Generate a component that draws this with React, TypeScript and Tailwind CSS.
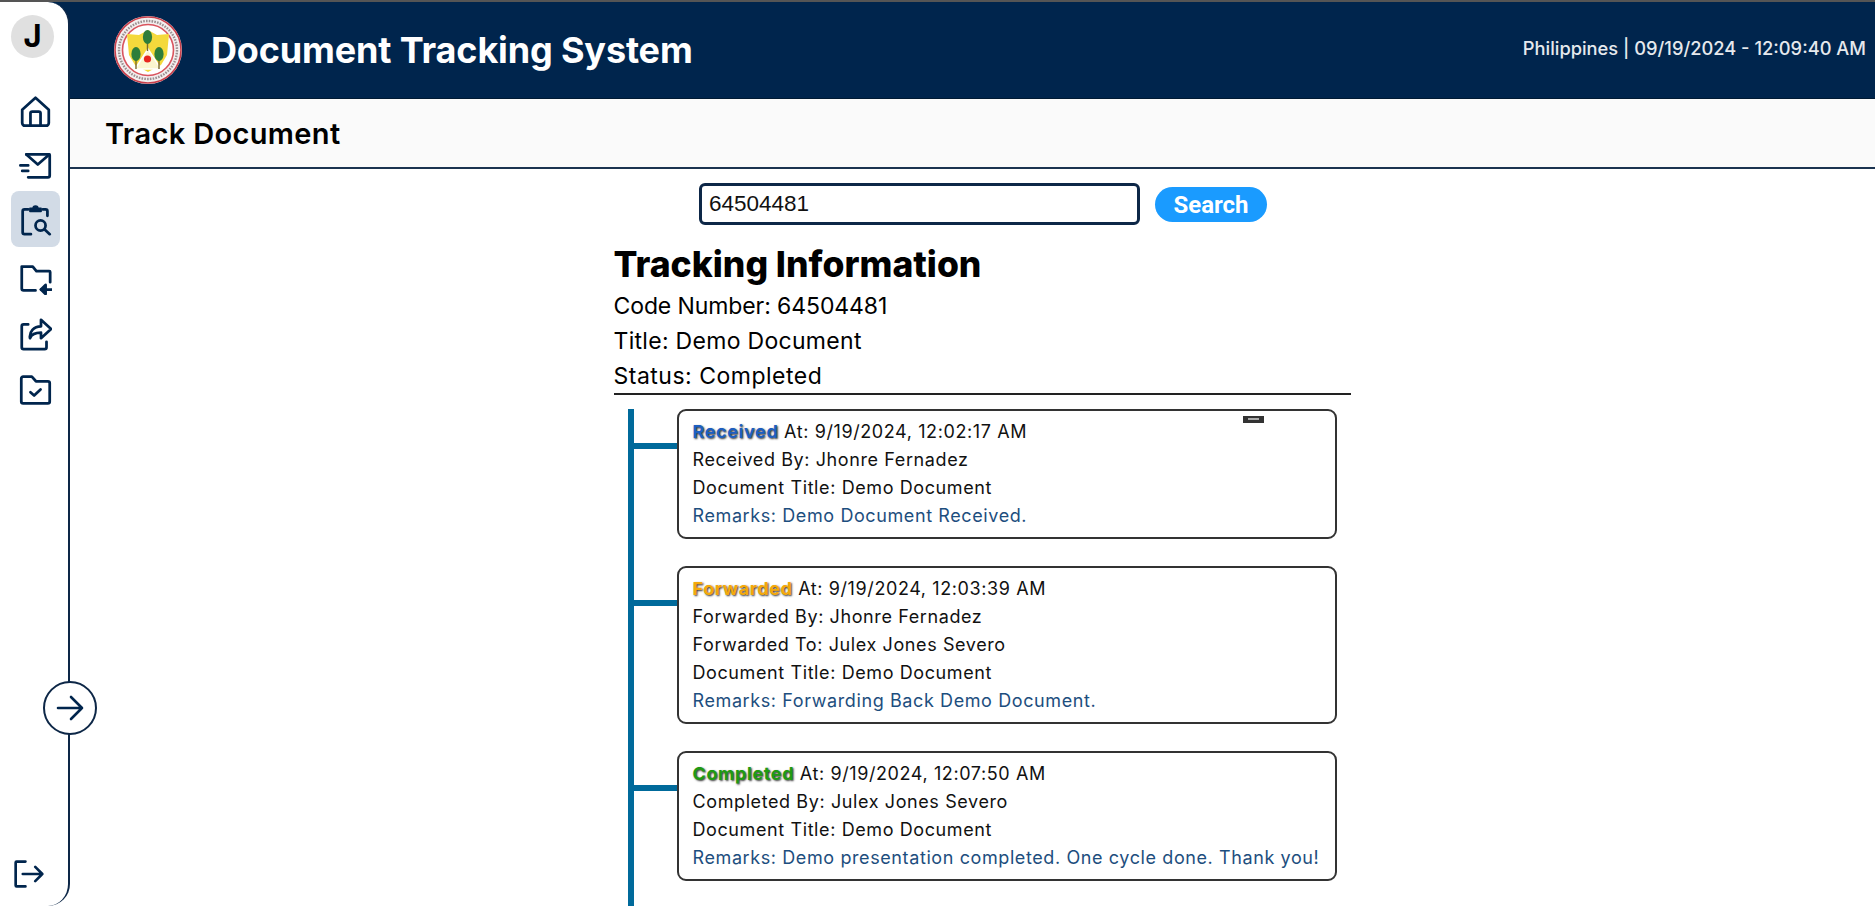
import React from "react";

const NAVY = "#00254d";

function Icon({ children, w = 33, h = 33 }: { children: React.ReactNode; w?: number; h?: number }) {
  return (
    <svg width={w} height={h} viewBox="0 0 36 36" fill="none" stroke={NAVY} strokeWidth={3} strokeLinecap="round" strokeLinejoin="round">
      {children}
    </svg>
  );
}

function Logo() {
  return (
    <svg width="70" height="70" viewBox="0 0 70 70">
      <circle cx="35" cy="35" r="34" fill="#f3eeee" />
      <circle cx="35" cy="35" r="33" fill="none" stroke="#c9404c" strokeWidth="1.6" />
      <circle cx="35" cy="35" r="25.5" fill="#fff" stroke="#d9545e" strokeWidth="1.6" />
      <circle cx="35" cy="35" r="29" fill="none" stroke="#9a8f90" strokeWidth="2.4" strokeDasharray="1.6 1.2" />
      <path d="M14 19 L26 20 L35 15 L44 20 L56 19 L54 40 L48 50 L35 57 L22 50 L16 40 Z" fill="#f4d93c" />
      <path d="M35 34 L48 54 L22 54 Z" fill="#fbf6d0" stroke="#fff" strokeWidth="1.5" />
      <circle cx="34.5" cy="44" r="3.6" fill="#e8261f" />
      <path d="M34.5 28v8M23 44v10M46 44v10" stroke="#7a6a2e" strokeWidth="1.4" />
      <ellipse cx="34.5" cy="22" rx="4.6" ry="7" fill="#2e7d3a" />
      <ellipse cx="23" cy="39" rx="4.6" ry="7" fill="#2e7d3a" />
      <ellipse cx="46" cy="39" rx="4.6" ry="7" fill="#2e7d3a" />
    </svg>
  );
}

const Home = () => (
  <Icon>
    <path d="M3.5 16 18 3l14.5 13v14.5a3 3 0 0 1-3 3h-23a3 3 0 0 1-3-3Z" />
    <path d="M12.5 33V20a2 2 0 0 1 2-2h7a2 2 0 0 1 2 2v13" />
  </Icon>
);
const MailFast = () => (
  <Icon>
    <path d="M8 7h24.5a1 1 0 0 1 1 1v22a2 2 0 0 1-2 2H10" />
    <path d="m8 7 12.5 11L33 7" />
    <path d="M1.500 19H10M3.500 25H10" />
  </Icon>
);
const ClipSearch = () => (
  <Icon>
    <path d="M10 7H6a2 2 0 0 0-2 2v23a2 2 0 0 0 2 2H13M26 7h3a2 2 0 0 1 2 2v5" />
    <path d="M12 9V6h3.500a2.500 2.500 0 0 1 5 0H24v3Z" fill={NAVY} strokeWidth={2} />
    <circle cx="23.500" cy="24.500" r="5.500" />
    <path d="m28 29 5.500 5" />
  </Icon>
);
const FolderIn = () => (
  <Icon>
    <path d="M18 31H5a2 2 0 0 1-2-2V5h12l4 5h14a1 1 0 0 1 1 1v11" />
    <path d="M24 30h11" />
    <path d="m29 25-5 5 5 5Z" fill={NAVY} />
  </Icon>
);
const ShareBox = () => (
  <Icon>
    <path d="M10 7H5a2 2 0 0 0-2 2v23a2 2 0 0 0 2 2h23a2 2 0 0 0 2-2v-6" />
    <path d="M24 2l11 10-11 10v-6c-6 0-10 1-12 6-1-7 4-13 12-13Z" />
  </Icon>
);
const FolderCheck = () => (
  <Icon>
    <path d="M2.500 6a2 2 0 0 1 2-2H14l4.500 5h13a2 2 0 0 1 2 2v20a2 2 0 0 1-2 2h-27a2 2 0 0 1-2-2Z" />
    <path d="m12.500 21 4 3.500 7-6.500" />
  </Icon>
);
const LogoutIcon = () => (
  <Icon w={32} h={32}>
    <path d="M14 4H4a1 1 0 0 0-1 1v26a1 1 0 0 0 1 1h10" />
    <path d="M11 18h22M25 10l8 8-8 8" />
  </Icon>
);

function Row({ children, className, active }: { children: React.ReactNode; className: string; active?: boolean }) {
  return (
    <div className={`flex w-[49px] items-center justify-center rounded-lg ${active ? "bg-[#d2dbe6]" : ""} ${className}`}>
      {children}
    </div>
  );
}

function Sidebar() {
  return (
    <aside className="relative z-10 flex h-full w-[70px] shrink-0 flex-col items-center rounded-r-[22px] border-r-2 border-[#0d2747] bg-white pr-[3px] pt-[13px]">
      <div className="flex h-[43px] w-[43px] items-center justify-center rounded-full bg-[#e0e0e0] text-[31px] font-bold text-black">J</div>
      <div className="ml-[6px] mt-[25px] flex flex-col items-center">
        <Row className="h-[56px]"><Home /></Row>
        <Row className="h-[51px]"><MailFast /></Row>
        <Row className="mt-[1px] h-[56px]" active><ClipSearch /></Row>
        <Row className="mt-[3px] h-[56px]"><FolderIn /></Row>
        <Row className="h-[56px]"><ShareBox /></Row>
        <Row className="-mt-[1px] h-[56px]"><FolderCheck /></Row>
      </div>
      <div className="mt-auto mb-[16px] flex w-full justify-start pl-[13px]"><LogoutIcon /></div>
      <button className="absolute left-[43px] top-[679px] flex h-[54px] w-[54px] items-center justify-center rounded-full border-2 border-[#0d2747] bg-white">
        <svg width="28" height="28" viewBox="0 0 28 28" fill="none" stroke={NAVY} strokeWidth="2.6" strokeLinecap="round" strokeLinejoin="round">
          <path d="M2 14h24M15 3l11 11-11 11" />
        </svg>
      </button>
    </aside>
  );
}

function Card({ label, color, at, lines, remarks, top }: { label: string; color: string; at: string; lines: string[]; remarks: string; top: number }) {
  return (
    <div className="relative">
      <div className="absolute -left-[43px] h-[6px] w-[43px] bg-[#006a9b]" style={{ top }} />
      <div className="relative w-[660px] rounded-[9px] border-2 border-[#333] bg-white px-[14px] py-[7px] text-[18px] leading-[28px] tracking-[0.6px] text-[#111]">
        <div>
          <span className="font-bold [text-shadow:1px_1px_2px_#333]" style={{ color }}>{label}</span> At: {at}
        </div>
        {lines.map((l) => (
          <div key={l}>{l}</div>
        ))}
        <div className="text-[#1d4e7e]">{remarks}</div>
      </div>
    </div>
  );
}

export default function App() {
  return (
    <div className="flex h-[906px] w-full overflow-hidden border-t-2 border-[#555] bg-white font-['Inter',sans-serif] text-black">
      <Sidebar />
      <main className="-ml-[22px] flex min-w-0 flex-1 flex-col">
        <header className="flex h-[96px] shrink-0 items-center bg-[#00254d] pl-[65px] pr-[9px]">
          <Logo />
          <h1 className="ml-[28px] text-[36px] font-bold tracking-[-0.15px] text-white">Document Tracking System</h1>
          <div className="mb-[2px] ml-auto text-[18.3px] font-medium text-[#e6e9ed]">Philippines | 09/19/2024 - 12:09:40 AM</div>
        </header>
        <div className="flex h-[71px] shrink-0 items-center border-b-2 border-t border-b-[#1b3350] border-t-[#001a33] bg-[#fafafa] pl-[57px] pt-[2px] text-[29px] font-semibold tracking-[0.35px]">
          Track Document
        </div>
        <div className="flex min-h-0 flex-1 flex-col items-center pl-[43px]">
          <div className="mt-[14px] flex items-center gap-[15px]">
            <input
              readOnly
              value="64504481"
              className="h-[42px] w-[441px] rounded-[6px] border-[3px] border-[#0d2747] px-[7px] font-['Liberation_Sans',sans-serif] text-[22.5px] text-[#111] outline-none"
            />
            <button className="h-[35px] w-[112px] rounded-full bg-[#1a9bff] font-['Roboto',sans-serif] text-[24px] font-bold text-white">Search</button>
          </div>
          <section className="-ml-[2px] mt-[18px] flex w-[737px] flex-col">
            <h2 className="text-[35.5px] font-extrabold leading-[44px]">Tracking Information</h2>
            <p className="mt-[2px] text-[23px] leading-[35px] tracking-[-0.1px]">Code Number: 64504481</p>
            <p className="text-[23px] leading-[35px] tracking-[0.3px]">Title: Demo Document</p>
            <p className="text-[23px] leading-[35px] tracking-[0.5px]">Status: Completed</p>
            <div className="-mt-[1px] h-[2px] bg-[#222]" />
            <div className="relative ml-[14px] mt-[14px] flex flex-col gap-[27px] border-l-[6px] border-[#006a9b] pb-[40px] pl-[43px]">
              <div className="relative">
                <Card label="Received" color="#1d5fc0" at="9/19/2024, 12:02:17 AM" top={34} lines={["Received By: Jhonre Fernadez", "Document Title: Demo Document"]} remarks="Remarks: Demo Document Received." />
                <div className="absolute left-[566px] top-[7px] flex h-[7px] w-[21px] justify-center bg-[#333]">
                  <div className="mt-[2px] h-[2px] w-[11px] bg-[#aaa]" />
                </div>
              </div>
              <Card label="Forwarded" color="#f5a90a" at="9/19/2024, 12:03:39 AM" top={34} lines={["Forwarded By: Jhonre Fernadez", "Forwarded To: Julex Jones Severo", "Document Title: Demo Document"]} remarks="Remarks: Forwarding Back Demo Document." />
              <Card label="Completed" color="#1f9a12" at="9/19/2024, 12:07:50 AM" top={34} lines={["Completed By: Julex Jones Severo", "Document Title: Demo Document"]} remarks="Remarks: Demo presentation completed. One cycle done. Thank you!" />
            </div>
          </section>
        </div>
      </main>
    </div>
  );
}
